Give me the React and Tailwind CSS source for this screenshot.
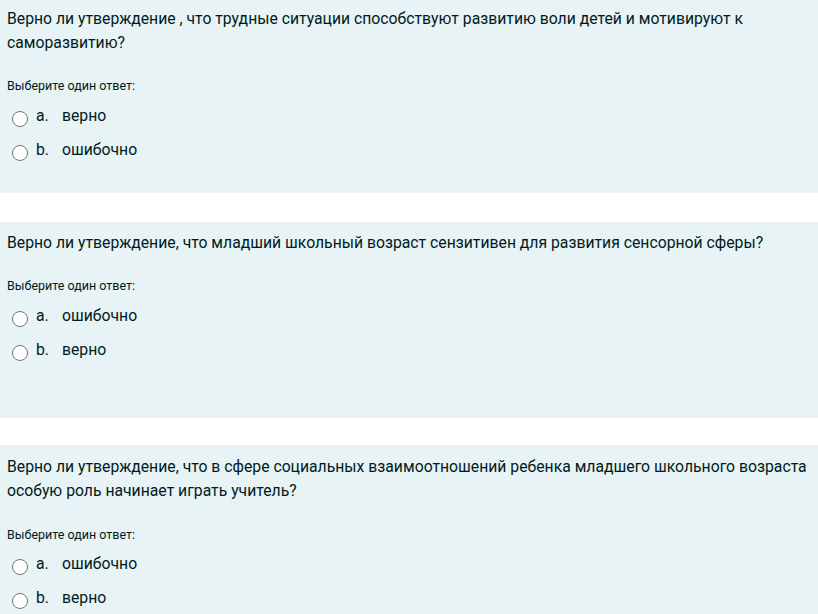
import React from "react";

function Radio() {
  return (
    <span className="mt-[5px] ml-[5px] mr-[8px] inline-block h-[16px] w-[16px] shrink-0 rounded-full border border-[#767676] bg-white" />
  );
}

function Option({ letter, text }) {
  return (
    <div className="flex h-[34px] items-center text-[15.75px]">
      <Radio />
      <span className="w-[26px] -mt-[1px]">{letter}</span>
      <span className="-mt-[1px]">{text}</span>
    </div>
  );
}

function Card({ question, options, pt, pb, mb, gapQ, gapO }) {
  return (
    <div className={`bg-[#e7f3f5] pl-[7px] pr-[7px] ${pt} ${pb} ${mb}`}>
      <div className="text-[15.75px] leading-[24px]">{question}</div>
      <div className={`${gapQ} text-[12.5px] leading-[18px]`}>Выберите один ответ:</div>
      <div className={gapO}>
        {options.map((o) => (
          <Option key={o[0]} letter={o[0]} text={o[1]} />
        ))}
      </div>
    </div>
  );
}

export default function App() {
  return (
    <div
      className="w-[818px] h-[614px] overflow-hidden bg-white text-[#001a1e]"
      style={{ fontFamily: "Roboto, 'Noto Sans', sans-serif" }}
    >
      <Card
        question="Верно ли утверждение , что трудные ситуации способствуют развитию воли детей и мотивируют к саморазвитию?"
        options={[["a.", "верно"], ["b.", "ошибочно"]]}
        pt="pt-[7px]"
        pb="pb-[26px]"
        mb="mb-[29px]"
        gapQ="mt-[22px]"
        gapO="mt-[4px]"
      />
      <Card
        question="Верно ли утверждение, что младший школьный возраст сензитивен для развития сенсорной сферы?"
        options={[["a.", "ошибочно"], ["b.", "верно"]]}
        pt="pt-[9px]"
        pb="pb-[51px]"
        mb="mb-[27px]"
        gapQ="mt-[22px]"
        gapO="mt-[4px]"
      />
      <Card
        question="Верно ли утверждение, что в сфере социальных взаимоотношений ребенка младшего школьного возраста особую роль начинает играть учитель?"
        options={[["a.", "ошибочно"], ["b.", "верно"]]}
        pt="pt-[10px]"
        pb="pb-[40px]"
        mb="mb-[0px]"
        gapQ="mt-[23px]"
        gapO="mt-[3px]"
      />
    </div>
  );
}
